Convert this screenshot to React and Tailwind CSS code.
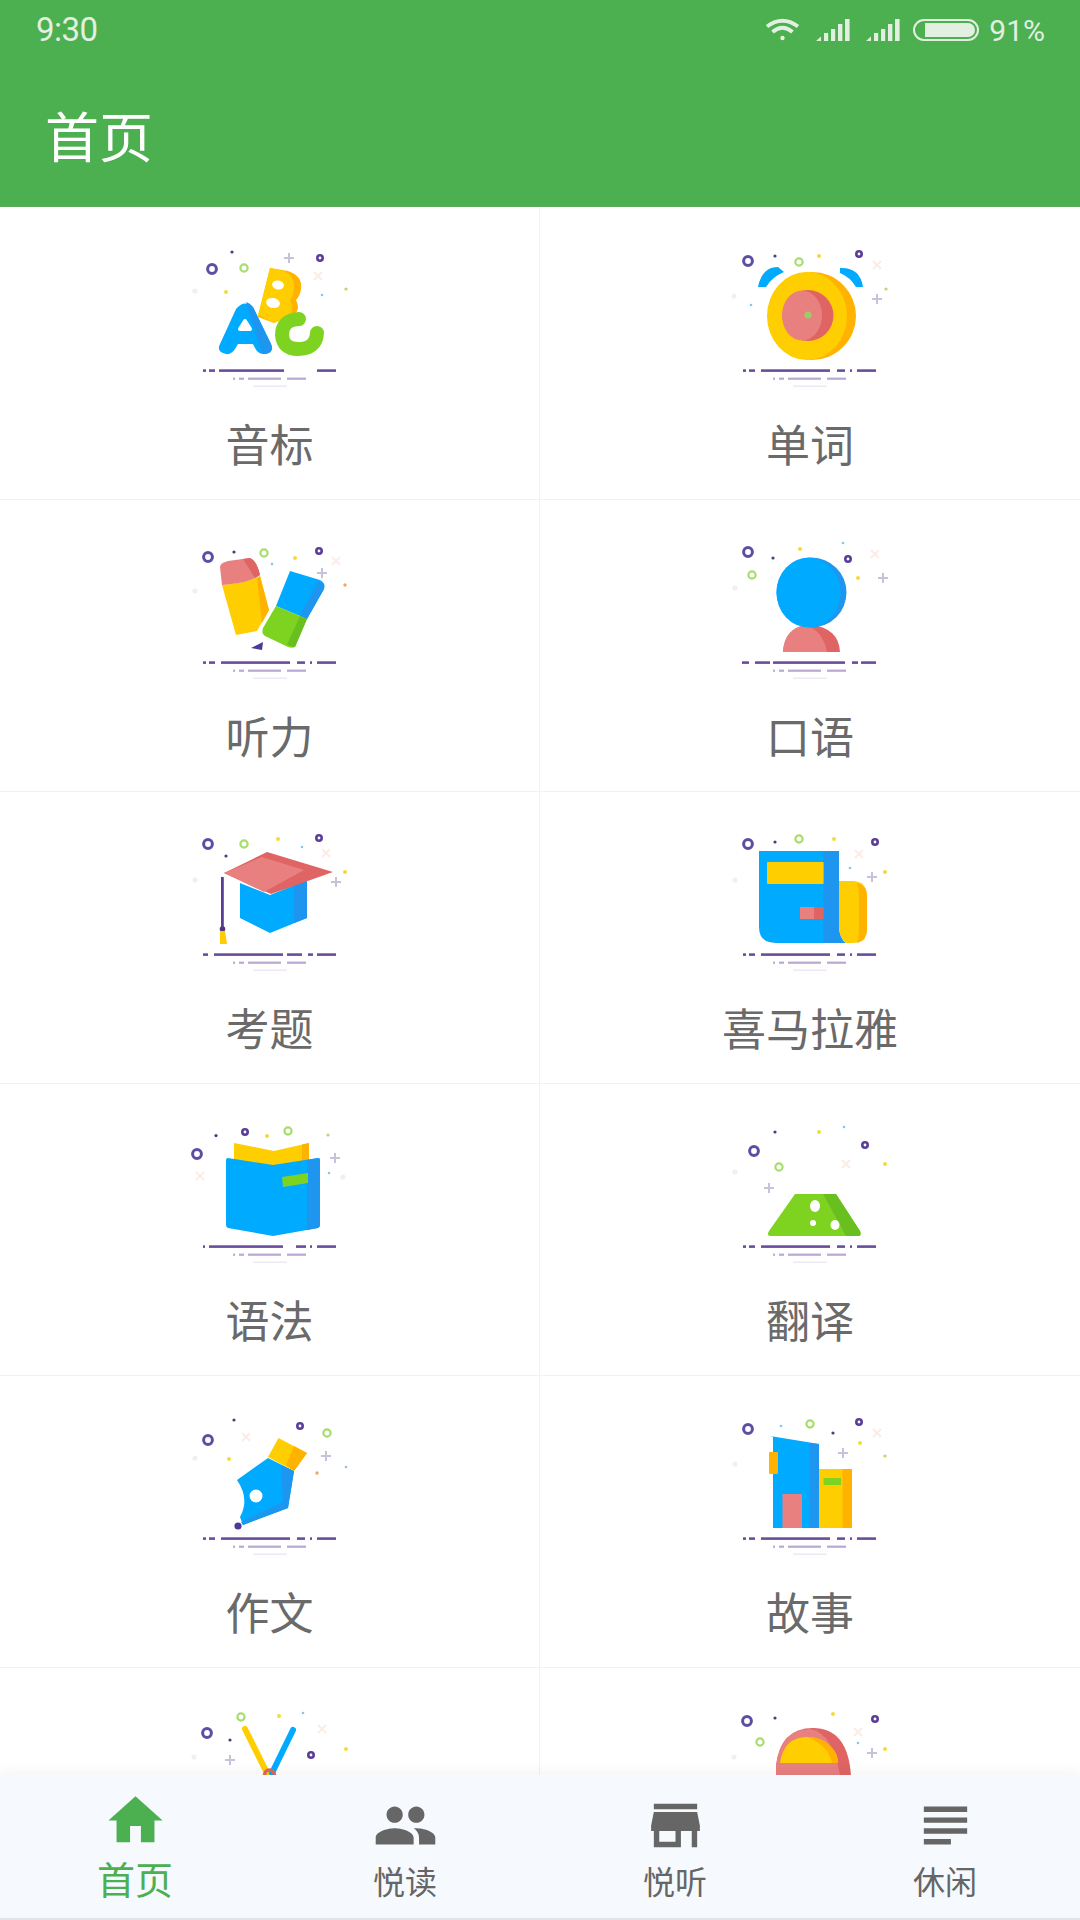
import React from 'react';

const BLUE = '#00aaff';
const BLUE_D = '#1e96f0';
const YEL = '#ffce00';
const YEL_D = '#ffb300';
const PINK = '#e88080';
const PINK_D = '#e06464';
const GRN = '#7ed321';
const GRN_D = '#69bf1e';

// small confetti around every picture
const Spark = ({ t, x, y }) => {
  if (t === 'ring') return <circle cx={x} cy={y} r="4.4" fill="none" stroke="#5a4fa2" strokeWidth="3" />;
  if (t === 'pring') return <circle cx={x} cy={y} r="2.7" fill="none" stroke="#5b3d9a" strokeWidth="2.6" />;
  if (t === 'gear') return <circle cx={x} cy={y} r="3.6" fill="none" stroke="#a6de6c" strokeWidth="2.2" />;
  if (t === 'plus') return <path d={`M${x - 5} ${y}H${x + 5}M${x} ${y - 5}V${y + 5}`} stroke="#c6c2dc" strokeWidth="2" />;
  if (t === 'x') return <path d={`M${x - 4} ${y - 4}L${x + 4} ${y + 4}M${x + 4} ${y - 4}L${x - 4} ${y + 4}`} stroke="#fcece6" strokeWidth="2" />;
  if (t === 'faint') return <circle cx={x} cy={y} r="2.6" fill="#f0f0f0" />;
  if (t === 'dot') return <circle cx={x} cy={y} r="1.6" fill="#4a3f7a" />;
  if (t === 'y') return <circle cx={x} cy={y} r="2" fill="#f5da3c" />;
  if (t === 'tan') return <circle cx={x} cy={y} r="1.6" fill="#d0cc6e" />;
  if (t === 'blue') return <circle cx={x} cy={y} r="1.3" fill="#8fc4e4" />;
  return <circle cx={x} cy={y} r="1.7" fill="#f0a860" />;
};

const DASH_DEFAULT = [[33, 36], [39, 45], [51, 120], [127, 135], [140, 142], [147, 166]];

const Art = ({ sparks, dashes = DASH_DEFAULT, children }) => (
  <svg viewBox="0 0 200 180" className="w-[200px] h-[180px] shrink-0 blur-[0.6px]">
    {sparks.map(([t, x, y], i) => <Spark key={i} t={t} x={x} y={y} />)}
    {children}
    {dashes.map(([a, b], i) => (
      <rect key={i} x={a} y="138.3" width={b - a} height="2.6" fill="#6a4c9c" />
    ))}
    {[[63, 65], [69, 74], [78, 111], [117, 136]].map(([a, b], i) => (
      <rect key={i} x={a} y="146.6" width={b - a} height="2.2" fill="#b9a8d2" />
    ))}
    <rect x="83" y="154.5" width="34" height="1.4" fill="#ece8f2" />
  </svg>
);

const items = [
  {
    label: '音标',
    sparks: [['ring', 42, 38], ['dot', 62, 21], ['gear', 74, 37], ['plus', 119, 27], ['pring', 150, 27], ['x', 148, 45], ['faint', 25, 60], ['y', 56, 61], ['blue', 152, 64], ['tan', 176, 58]],
    dashes: [[33, 36], [39, 45], [49, 114], [147, 166]],
    art: (
      <>
        <path d="M100 37L118 40Q133 45 131 58Q130 65 126 69Q131 78 124 84L104 92L88 86Z" fill={YEL_D} />
        <path d="M100 37L114 40Q125 45 124 58Q123 65 120 69Q124 76 120 84L104 92L88 84Z" fill={YEL} />
        <ellipse cx="108" cy="54" rx="6" ry="4.5" fill="#fff" transform="rotate(12 108 54)" />
        <ellipse cx="103" cy="72" rx="7" ry="5" fill="#fff" transform="rotate(12 103 72)" />
        <path d="M50 113L66 78Q74 68 83 76L101 113Q105 122 94 123Q88 123 85 117L83 113H68L65 118Q61 124 56 123Q46 121 50 113Z" fill={BLUE} />
        <path d="M76 71Q80 72 83 76L101 113Q105 122 94 123L92 122Z" fill={BLUE_D} />
        <path d="M70 98L75 90L80 98Z" fill="#fff" stroke="#fff" strokeWidth="4" strokeLinejoin="round" />
        <path d="M129 88Q112 89 112 104Q113 118 128 118Q146 118 147 102" fill="none" stroke={GRN} strokeWidth="14" strokeLinecap="round" />
      </>
    ),
  },
  {
    label: '单词',
    sparks: [['ring', 38, 30], ['dot', 65, 25], ['gear', 89, 31], ['y', 109, 25], ['pring', 149, 23], ['x', 167, 34], ['faint', 24, 65], ['blue', 41, 74], ['plus', 167, 68], ['tan', 176, 58]],
    art: (
      <>
        <path d="M48 56Q52 36 68 36L74 41Q62 46 56 56Z" fill={BLUE} />
        <path d="M130 37Q150 36 153 56L146 56Q140 46 130 42Z" fill={BLUE} />
        <circle cx="102" cy="85" r="44" fill={YEL_D} />
        <ellipse cx="97" cy="85" rx="40" ry="44" fill={YEL} />
        <circle cx="98" cy="84.5" r="25.5" fill={PINK_D} />
        <ellipse cx="92" cy="84.5" rx="20" ry="25" fill={PINK} />
        <circle cx="98" cy="84" r="3.5" fill="#9ccc65" />
      </>
    ),
  },
  {
    label: '听力',
    sparks: [['ring', 38, 34], ['dot', 64, 29], ['gear', 94, 30], ['y', 125, 35], ['pring', 149, 28], ['x', 166, 38], ['plus', 152, 50], ['orange', 175, 62], ['faint', 25, 68], ['blue', 102, 41]],
    art: (
      <>
        <path d="M52 62Q75 60 90 53L99 87L87 108L66 112Z" fill={YEL} />
        <path d="M87 56L90 53L99 87L92 100Z" fill={YEL_D} />
        <path d="M50 44Q50 40 58 38L80 35Q87 38 90 52Q80 60 52 62Z" fill={PINK} />
        <path d="M73 36L80 35Q87 38 90 52L85 55Z" fill={PINK_D} />
        <path d="M93 119L81 125L92 127Z" fill="#4a3a9a" />
        <path d="M120 48L150 57Q156 60 154 66L137 96L106 83Z" fill={BLUE} />
        <path d="M148 58Q156 60 154 66L137 96L130 93Z" fill={BLUE_D} />
        <path d="M106 83L137 96L125 124Q121 126 116 123L95 113Q91 110 93 105Z" fill={GRN} />
        <path d="M130 93L137 96L125 124L117 122Z" fill={GRN_D} />
      </>
    ),
  },
  {
    label: '口语',
    sparks: [['ring', 38, 29], ['dot', 63, 35], ['y', 90, 26], ['blue', 133, 20], ['pring', 138, 36], ['x', 165, 31], ['gear', 42, 52], ['y', 148, 55], ['plus', 173, 55], ['faint', 25, 65]],
    dashes: [[32, 39], [45, 60], [63, 135], [142, 148], [151, 166]],
    art: (
      <>
        <path d="M73 129Q74 105 101 102Q129 105 130 129Z" fill={PINK_D} />
        <path d="M73 129Q74 105 96 102Q113 108 117 129Z" fill={PINK} />
        <circle cx="101.5" cy="69.5" r="35" fill={BLUE_D} />
        <ellipse cx="98.5" cy="69.5" rx="32" ry="35" fill={BLUE} />
      </>
    ),
  },
  {
    label: '考题',
    sparks: [['ring', 38, 29], ['dot', 56, 41], ['gear', 74, 29], ['y', 108, 24], ['blue', 132, 32], ['pring', 149, 23], ['x', 156, 38], ['y', 175, 57], ['plus', 166, 67], ['faint', 25, 65]],
    dashes: [[33, 38], [44, 113], [117, 132], [138, 143], [147, 166]],
    art: (
      <>
        <path d="M70 68L100 80L137 65V103L100 118L70 103Z" fill={BLUE} />
        <path d="M124 70L137 65V103L124 108Z" fill={BLUE_D} />
        <path d="M70 66L98 78L100 74L72 62Z" fill="#fff" />
        <path d="M54 58L97 37L163 57L101 79Z" fill={PINK_D} />
        <path d="M54 58L92 42L134 55L94 77Z" fill={PINK} />
        <rect x="51" y="62" width="2.8" height="51" fill="#5b3d9a" />
        <circle cx="52.5" cy="114" r="2.8" fill="#4a3a7a" />
        <path d="M50 116L55 116L57 129H50Z" fill={YEL} />
      </>
    ),
  },
  {
    label: '喜马拉雅',
    sparks: [['ring', 38, 29], ['dot', 65, 27], ['gear', 89, 24], ['y', 124, 24], ['pring', 165, 27], ['x', 149, 39], ['blue', 140, 53], ['plus', 162, 62], ['y', 175, 57], ['faint', 25, 65]],
    art: (
      <>
        <path d="M49 36H129V128H66Q49 128 49 112Z" fill={BLUE} />
        <path d="M113.6 36H129V112Q130 124 136 128H113.6Z" fill={BLUE_D} />
        <path d="M129 66H142Q157 66 157 82V114Q157 128 142 128H136Q129 122 129 112Z" fill={YEL} />
        <path d="M147 68Q157 70 157 82V114Q157 126 147 128Q149 122 149 112V82Q149 74 147 68Z" fill={YEL_D} />
        <rect x="57" y="47" width="56.6" height="22" rx="1" fill={YEL} />
        <rect x="90" y="92" width="14" height="12" fill={PINK} />
        <rect x="104" y="92" width="9.6" height="12" fill={PINK_D} />
      </>
    ),
  },
  {
    label: '语法',
    sparks: [['ring', 27, 47], ['dot', 46, 28.6], ['pring', 75, 25], ['y', 97, 29], ['gear', 118, 24], ['tan', 158, 28], ['plus', 165, 51], ['blue', 159, 66], ['faint', 173, 70], ['x', 30, 69]],
    dashes: [[33, 35], [39, 113], [126, 136], [140, 142], [147, 166]],
    art: (
      <>
        <path d="M64 36L104 44L139 36V60H64Z" fill={YEL} />
        <path d="M132 37.5L139 36V60H132Z" fill={YEL_D} />
        <path d="M56 53Q56 51 58 51L103 58L148 51Q150 51 150 53V118Q150 120 148 121L103 129L58 121Q56 120 56 118Z" fill={BLUE} />
        <path d="M137 53L148 51Q150 51 150 53V118Q150 120 148 121L137 123Z" fill={BLUE_D} />
        <path d="M112 70L138 66V76L113 80Z" fill={GRN} />
      </>
    ),
  },
  {
    label: '翻译',
    sparks: [['dot', 65, 25], ['y', 109, 25], ['blue', 134, 20], ['pring', 155, 38], ['ring', 44, 44], ['y', 175, 57], ['x', 136, 57], ['gear', 69, 60], ['plus', 59, 81], ['faint', 25, 65]],
    art: (
      <>
        <path d="M85 87H126L150 124Q152 129 148 129H61Q56 129 59 124Z" fill={GRN} />
        <path d="M113 87H126L150 124Q152 129 148 129H136Z" fill={GRN_D} />
        <ellipse cx="105" cy="99" rx="5" ry="6" fill="#fff" />
        <circle cx="103" cy="116" r="3" fill="#fff" />
        <ellipse cx="125" cy="118" rx="4.5" ry="5" fill="#fff" />
      </>
    ),
  },
  {
    label: '作文',
    sparks: [['dot', 64, 21], ['pring', 130, 27], ['gear', 157, 34], ['ring', 38, 41], ['x', 76, 38], ['y', 59, 60], ['plus', 156, 57], ['orange', 147, 74], ['blue', 176, 68], ['faint', 25, 59]],
    art: (
      <>
        <path d="M98 59L124 72L118 109L73 126L70 118Q80 100 67 81Z" fill={BLUE} />
        <path d="M111 66L124 72L118 109L73 126L71 123L113 103Z" fill={BLUE_D} />
        <circle cx="86" cy="97" r="6.5" fill="#fff" />
        <path d="M108.5 39L137 54L124 72L98 58Z" fill={YEL} />
        <path d="M124 47L137 54L124 72L116 66Z" fill={YEL_D} />
        <circle cx="68" cy="127" r="3.6" fill="#4a3a9a" />
      </>
    ),
  },
  {
    label: '故事',
    sparks: [['ring', 38, 30], ['blue', 71, 27], ['gear', 100, 25], ['dot', 123, 34], ['pring', 149, 23], ['x', 167, 34], ['y', 150, 44], ['plus', 133, 54], ['tan', 175, 57], ['faint', 25, 65]],
    art: (
      <>
        <path d="M60 37L109 45V129H63V38Z" fill={BLUE} />
        <path d="M99.5 44V129H109V45Z" fill={BLUE_D} />
        <rect x="59" y="53" width="9" height="22" rx="1" fill={YEL_D} />
        <rect x="72.5" y="95" width="19.5" height="34" fill={PINK} />
        <rect x="109" y="70" width="24" height="59" fill={YEL} />
        <rect x="132.5" y="70" width="9.5" height="59" fill={YEL_D} />
        <rect x="113.6" y="79" width="17.4" height="7" fill={GRN} />
      </>
    ),
  },
  // last row runs under the tab bar, its labels are never seen
  {
    sparks: [['ring', 37, 42], ['gear', 71, 26], ['y', 109, 25], ['blue', 133, 22], ['x', 152, 38], ['dot', 60, 49], ['pring', 141, 64], ['y', 176, 58], ['plus', 60, 69], ['faint', 24, 66]],
    art: (
      <>
        <path d="M75 38L97 82" fill="none" stroke={YEL} strokeWidth="6" strokeLinecap="round" />
        <path d="M123 39L102 82" fill="none" stroke={BLUE} strokeWidth="6" strokeLinecap="round" />
        <circle cx="99.5" cy="84" r="5" fill="none" stroke={PINK_D} strokeWidth="3.5" />
      </>
    ),
  },
  {
    sparks: [['ring', 37, 30], ['dot', 65, 27], ['y', 123, 23], ['pring', 165, 28], ['gear', 50, 51], ['x', 148, 41], ['blue', 148, 52], ['plus', 162, 62], ['y', 175, 58], ['faint', 24, 66]],
    art: (
      <>
        <path d="M66 90V75Q70 37 103 37Q138 37 141 85V90Z" fill={PINK_D} />
        <path d="M66 90V75Q70 39 100 38Q124 42 131 90Z" fill={PINK} />
        <path d="M70 72Q74 46 97 46Q112 46 120 55Q128 62 128 72Z" fill={YEL} />
        <path d="M97 46Q112 46 120 55Q128 62 128 72H122Q118 54 97 46Z" fill={YEL_D} />
      </>
    ),
  },
];

const tabs = [
  { label: '首页', active: true, d: 'M10 20v-6h4v6h5v-8h3L12 3 2 12h3v8z' },
  { label: '悦读', d: 'M16 11c1.66 0 2.99-1.34 2.99-3S17.66 5 16 5c-1.66 0-3 1.34-3 3s1.34 3 3 3zm-8 0c1.66 0 2.99-1.34 2.99-3S9.66 5 8 5C6.34 5 5 6.34 5 8s1.34 3 3 3zm0 2c-2.33 0-7 1.17-7 3.5V19h14v-2.5c0-2.33-4.67-3.5-7-3.5zm8 0c-.29 0-.62.02-.97.05 1.16.84 1.97 1.97 1.97 3.45V19h6v-2.5c0-2.33-4.67-3.5-7-3.5z' },
  { label: '悦听', d: 'M20 4H4v2h16V4zm1 10v-2l-1-5H4l-1 5v2h1v6h10v-6h4v6h2v-6h1zm-9 4H6v-4h6v4z' },
  { label: '休闲', d: 'M14 17H4v2h10v-2zm6-8H4v2h16V9zM4 15h16v-2H4v2zM4 5v2h16V5H4z' },
];

const Signal = () => (
  <svg viewBox="0 0 34 22" className="w-[34px] h-[22px]" fill="#e3efe0">
    <path d="M0 22L5 17.5V22Z" />
    <rect x="8" y="14" width="4.2" height="8" />
    <rect x="15" y="10" width="4.2" height="12" />
    <rect x="22" y="5" width="4.4" height="17" />
    <rect x="29" y="0" width="4.6" height="22" />
  </svg>
);

const StatusBar = () => (
  <div className="h-[60px] pl-[36px] pr-[35px] flex items-center justify-between text-[#e3efe0] font-['Roboto',sans-serif]">
    <span className="text-[33px] tracking-[-0.5px]">9:30</span>
    <div className="flex items-center">
      <svg viewBox="0 0 35 24" className="w-[35px] h-[24px]" fill="none" stroke="#e3efe0" strokeWidth="4">
        <path d="M2 8.5Q17.5 -3 33 8.5" />
        <path d="M7.5 14Q17.5 5.5 27.5 14" />
        <circle cx="17.5" cy="20" r="2.2" fill="#e3efe0" stroke="none" />
      </svg>
      <div className="ml-[16px]"><Signal /></div>
      <div className="ml-[16px]"><Signal /></div>
      <div className="ml-[13px] w-[66px] h-[22px] rounded-full border-2 border-[#e3efe0] p-[2px] flex justify-end">
        <div className="h-full w-[86%] rounded-r-full rounded-l-[3px] bg-[#e3efe0]" />
      </div>
      <span className="ml-[10px] text-[30px]">91%</span>
    </div>
  </div>
);

export default function App() {
  return (
    <div className="w-[1080px] h-[1920px] flex flex-col bg-white font-['Noto_Sans_CJK_SC','Noto_Sans',sans-serif]">
      <header className="h-[207px] shrink-0 bg-[#4caf50] border-b-2 border-[#5aa85e]">
        <StatusBar />
        <h1 className="mt-[39px] pl-[45px] text-[54px] leading-[72px] font-normal text-white">首页</h1>
      </header>

      <main className="flex-1 min-h-0 pt-px overflow-hidden grid grid-cols-2 auto-rows-[292px]">
        {items.map((item, i) => (
          <div
            key={i}
            className={`flex flex-col items-center pt-[23px] border-b border-[#f2f2f2] ${i % 2 === 0 ? 'border-r' : ''}`}
          >
            <Art sparks={item.sparks} dashes={item.dashes}>{item.art}</Art>
            {item.label && <span className="mt-[3px] text-[44px] leading-[58px] text-[#6a6a6a]">{item.label}</span>}
          </div>
        ))}
      </main>

      <nav className="relative h-[145px] shrink-0 bg-[#f6faff] border-b-2 border-[#e2e4ea] shadow-[0_-6px_10px_rgba(0,0,0,0.035)] grid grid-cols-4">
        {tabs.map((tab) => (
          <div
            key={tab.label}
            className={`flex flex-col items-center ${tab.active ? 'pt-[13px] text-[#4caf50]' : 'pt-[18px] text-[#666666]'}`}
          >
            <svg viewBox="0 0 24 24" className="w-[65px] h-[65px]" fill="currentColor">
              <path d={tab.d} />
            </svg>
            <span className={tab.active ? 'text-[38px] leading-[50px]' : 'text-[32px] leading-[44px]'}>{tab.label}</span>
          </div>
        ))}
      </nav>
    </div>
  );
}
